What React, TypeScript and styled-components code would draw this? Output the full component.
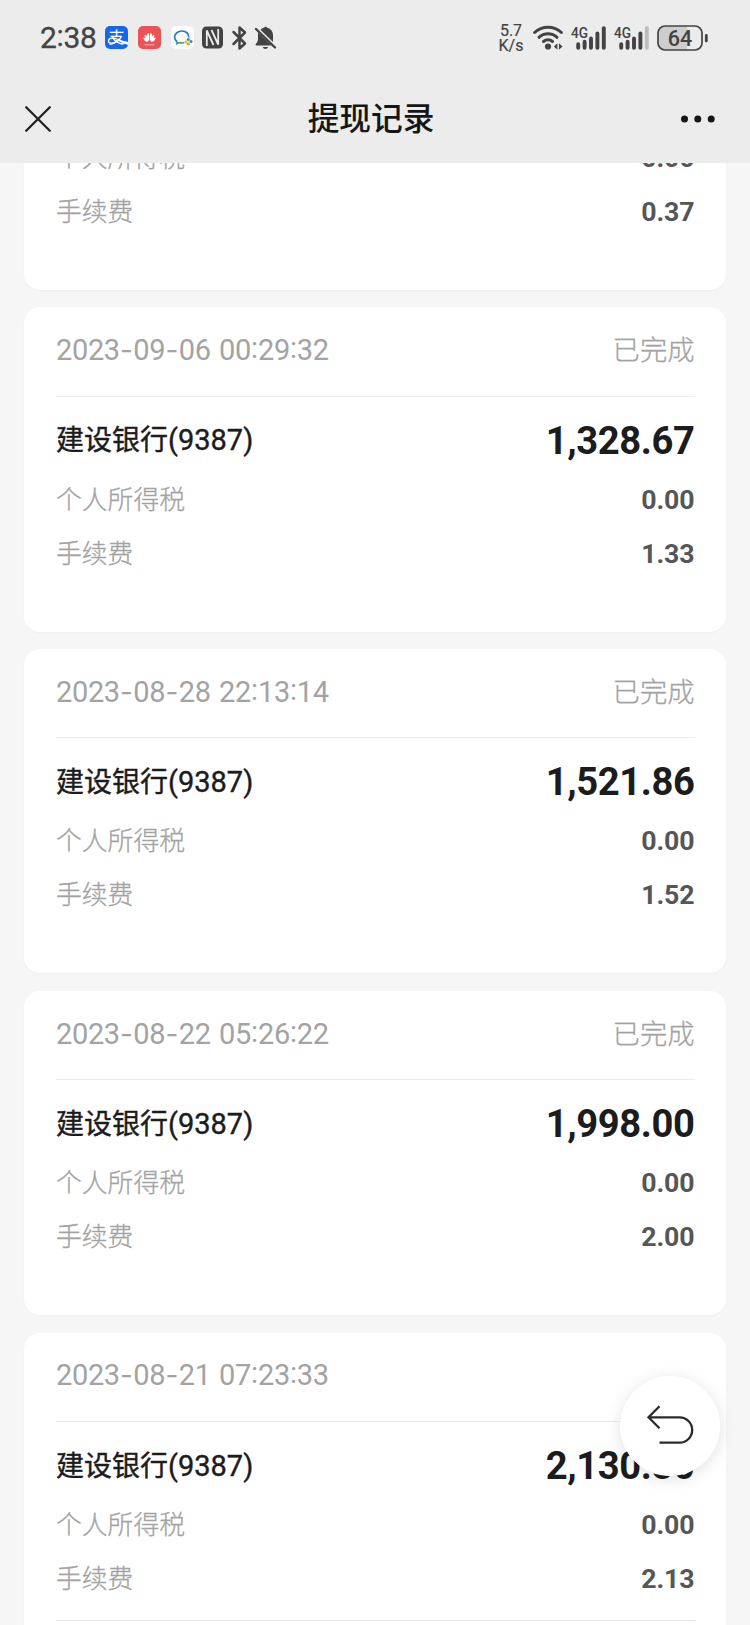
import React from "react";
import styled, { createGlobalStyle } from "styled-components";

const GlobalStyle = createGlobalStyle`
  html, body { margin: 0; padding: 0; background: #f6f6f6; }
  body { font-family: Roboto, "Noto Sans CJK SC", sans-serif; }
  * { box-sizing: border-box; }
`;

const Screen = styled.main`
  width: 750px;
  height: 1625px;
  display: flex;
  flex-direction: column;
  overflow: hidden;
  background: #f6f6f6;
`;

const Top = styled.header`
  flex: none;
  height: 163px;
  background: #ececec;
  position: relative;
  z-index: 1;
`;

const StatusBar = styled.div`
  height: 75px;
  padding: 0 42px 0 40px;
  display: flex;
  justify-content: space-between;
  align-items: center;
  color: #434343;
`;

const StatusGroup = styled.div`
  display: flex;
  align-items: center;
`;

const Clock = styled.span`
  width: 65px;
  font-size: 30px;
  line-height: 36px;
  letter-spacing: -0.3px;
  white-space: nowrap;
  -webkit-text-stroke: 0.3px #434343;
  i { font-style: normal; position: relative; top: -2px; }
`;

const Icon = styled.svg<{ $gap?: number }>`
  display: block;
  flex: none;
  overflow: visible;
  margin-left: ${(p) => p.$gap ?? 0}px;
`;

const Speed = styled.div`
  font-size: 16px;
  line-height: 15px;
  text-align: center;
  width: 26px;
  -webkit-text-stroke: 0.2px #434343;
`;

const NavBar = styled.nav`
  height: 87px;
  padding: 0 34px 0 24px;
  display: grid;
  grid-template-columns: 60px 1fr 50px;
  align-items: center;
`;

const Title = styled.h1`
  margin: 0;
  padding: 2px 8px 0 0;
  font-size: 31.7px;
  line-height: 40px;
  font-weight: 500;
  text-align: center;
  color: #161616;
`;

const List = styled.section`
  flex: 1;
  min-height: 0;
  overflow: hidden;
`;

const Records = styled.div`
  margin-top: -32.4px;
  padding: 0 24px;
  display: flex;
  flex-direction: column;
  gap: 17.3px;
`;

const Card = styled.article<{ $tail?: boolean }>`
  flex: none;
  height: ${(p) => (p.$tail ? 159.1 : 324.6)}px;
  padding: 0 31.5px 0 32px;
  border-radius: 16px;
  background: #fff;
  box-shadow: 0 1px 2px rgba(0, 0, 0, 0.03);
`;

const CardHead = styled.div`
  height: 89.5px;
  padding-bottom: 3px;
  display: flex;
  align-items: center;
  justify-content: space-between;
  border-bottom: 1.5px solid #ebebeb;
  color: #a3a3a3;
`;

const Stamp = styled.time`
  font-size: 29px;
  line-height: 36px;
  word-spacing: 1.6px;
  letter-spacing: -0.35px;
  white-space: nowrap;
`;

const Dash = styled.span`
  display: inline-block;
  width: 13.5px;
  text-align: center;
  font-family: Inter, sans-serif;
  font-size: 28px;
  letter-spacing: 0;
`;

const Colon = styled.span`
  display: inline-block;
  width: 7px;
  text-align: center;
  position: relative;
  top: -2px;
`;

const State = styled.span`
  padding-top: 2px;
  font-size: 27.3px;
  line-height: 36px;
  font-weight: 300;
  -webkit-text-stroke: 0.3px #a3a3a3;
`;

const Body = styled.div<{ $ruled?: boolean; $tail?: boolean }>`
  padding-top: ${(p) => (p.$tail ? 0 : 10)}px;
  height: ${(p) => (p.$ruled ? "198.5px" : "auto")};
  border-bottom: ${(p) => (p.$ruled ? "1.5px solid #e6e6e6" : "none")};
`;

const Row = styled.div<{ $main?: boolean }>`
  height: ${(p) => (p.$main ? 66 : 54)}px;
  padding-top: ${(p) => (p.$main ? 2 : 0)}px;
  display: flex;
  align-items: center;
  justify-content: space-between;
`;

const Bank = styled.span`
  font-size: 28px;
  line-height: 40px;
  font-weight: 400;
  color: #1c1c1c;
  -webkit-text-stroke: 0.4px #1c1c1c;
  b { font-size: 29px; font-weight: 400; }
`;

const Amount = styled.strong`
  font-size: 38.2px;
  line-height: 44px;
  font-weight: 700;
  letter-spacing: -0.4px;
  color: #1c1c1c;
`;

const Label = styled.span`
  font-size: 25.8px;
  line-height: 36px;
  font-weight: 300;
  color: #a3a3a3;
  -webkit-text-stroke: 0.3px #a3a3a3;
`;

const Value = styled.span`
  font-size: 26.7px;
  line-height: 36px;
  font-weight: 700;
  letter-spacing: -0.1px;
  color: #565656;
`;

const BackButton = styled.button`
  position: fixed;
  left: 620px;
  top: 1376px;
  width: 100px;
  height: 100px;
  padding: 0;
  border: 0;
  border-radius: 50%;
  background: #fff;
  box-shadow: 0 3px 16px rgba(0, 0, 0, 0.12);
  z-index: 2;
`;

type Item = { fee: string; date?: string; amount?: string; state?: string; ruled?: boolean };

const items: Item[] = [
  { fee: "0.37" },
  { date: "2023-09-06 00:29:32", amount: "1,328.67", fee: "1.33", state: "已完成" },
  { date: "2023-08-28 22:13:14", amount: "1,521.86", fee: "1.52", state: "已完成" },
  { date: "2023-08-22 05:26:22", amount: "1,998.00", fee: "2.00", state: "已完成" },
  { date: "2023-08-21 07:23:33", amount: "2,130.80", fee: "2.13", ruled: true },
];

function DateStamp({ value }: { value: string }) {
  return (
    <Stamp>
      {value.split(/([-:])/).map((part, i) =>
        part === "-" ? <Dash key={i}>-</Dash> : part === ":" ? <Colon key={i}>:</Colon> : part
      )}
    </Stamp>
  );
}

function Record({ item }: { item: Item }) {
  const tail = !item.date;
  return (
    <Card $tail={tail}>
      {item.date && (
        <CardHead>
          <DateStamp value={item.date} />
          {item.state && <State>{item.state}</State>}
        </CardHead>
      )}
      <Body $ruled={item.ruled} $tail={tail}>
        {item.amount && (
          <Row $main>
            <Bank>建设银行<b>(9387)</b></Bank>
            <Amount>{item.amount}</Amount>
          </Row>
        )}
        <Row><Label>个人所得税</Label><Value>0.00</Value></Row>
        <Row><Label>手续费</Label><Value>{item.fee}</Value></Row>
      </Body>
    </Card>
  );
}

function Signal({ gap, weak }: { gap: number; weak?: boolean }) {
  return (
    <Icon $gap={gap} width="35" height="26" viewBox="0 0 35 26">
      <text x="0" y="12.5" fontFamily="Roboto" fontWeight="500" fontSize="15.5" textLength="17" lengthAdjust="spacingAndGlyphs" fill="#434343">4G</text>
      <g strokeWidth="3.9" strokeLinecap="round" stroke="#434343">
        <path d="M7.2 19.3V22.8M13.6 16.8V22.8M20 13.5V22.8M26.4 8.5V22.8" />
        <path d="M32.8 3.2V22.8" stroke={weak ? "#bdbdbd" : "#434343"} />
      </g>
    </Icon>
  );
}

function StatusLeft() {
  return (
    <StatusGroup>
      <Clock>2<i>:</i>38</Clock>
      <Icon width="23" height="23" viewBox="0 0 23 23">
        <rect width="23" height="23" rx="5" fill="#1668ea" />
        <text x="3.500" y="16.500" fontFamily="Noto Sans CJK SC" fontWeight="400" fontSize="16" fill="#fff">支</text>
        <path d="M13 12.500c3 1.800 6.500 2.800 10 3.400v2.900c-4-.8-8-2.700-11-4.500z" fill="#fff" />
        <path d="M12.500 13.500c-2-1.600-8.500-2.200-9 1.200s6 3.400 9-.9" fill="none" stroke="#fff" strokeWidth="1.300" />
      </Icon>
      <Icon $gap={10} width="23" height="23" viewBox="0 0 23 23">
        <rect width="23" height="23" rx="5" fill="#ec5358" />
        <g fill="#fff">
          <path d="M11 15.300C8.300 12 8.400 7.500 10.500 7c.9 1.500.9 5 .5 8.300zM12 15.300c2.700-3.300 2.600-7.800.5-8.300-.9 1.500-.9 5-.5 8.300zM10.300 15.600C7.500 13.500 6 11 7 8.600c1.700.8 3 3.500 3.300 7zM12.700 15.600C15.500 13.500 17 11 16 8.600c-1.700.8-3 3.500-3.300 7zM9.900 16C7 15.600 5.300 13.800 5.500 11.500c2 .4 3.600 2.200 4.400 4.500zM13.100 16c2.900-.4 4.600-2.200 4.400-4.500-2 .4-3.600 2.200-4.400 4.500z" />
          <path d="M6.500 18.300h10v1h-10z" opacity=".55" />
        </g>
      </Icon>
      <Icon $gap={10} width="23" height="23" viewBox="0 0 23 23">
        <rect width="23" height="23" rx="5" fill="#fcfcfc" />
        <path d="M17.800 11.500C18 7.500 15 5 11 5S3.600 7.600 3.600 11c0 2 .9 3.700 2.500 4.800" fill="none" stroke="#2a7cc0" strokeWidth="1.700" />
        <path d="M6.200 15.500l-.4 2.200 2.700-1.200c1.500.5 3 .6 4.500.3" fill="none" stroke="#3f9c8c" strokeWidth="1.600" />
        <circle cx="17.300" cy="13.500" r="1.500" fill="#3e9b67" />
        <circle cx="20" cy="15.600" r="1.500" fill="#3983ca" />
        <circle cx="15" cy="16" r="1.600" fill="#e6b43e" />
        <circle cx="17.400" cy="18" r="1.600" fill="#e99b3e" />
      </Icon>
      <Icon $gap={7.500} width="21" height="23" viewBox="0 0 21 23">
        <rect y=".5" width="21" height="22" rx="4.500" fill="#434343" />
        <path d="M4.800 20V4.500L11.500 19M16.200 3V18.500L9.500 4" fill="none" stroke="#ececec" strokeWidth="1.800" />
      </Icon>
      <Icon $gap={9} width="15" height="24" viewBox="0 0 15 24">
        <path d="M1.500 6L13 17.500 7.500 22.500V1.500L13 6.500 1.500 18" fill="none" stroke="#434343" strokeWidth="2.500" strokeLinejoin="round" strokeLinecap="round" />
      </Icon>
      <Icon $gap={8} width="21" height="24" viewBox="0 0 21 24">
        <path d="M5.500 3.800C6.600 2.600 7.700 2 9 1.700c.6-1.300 2.600-1.300 3.200 0 4 1 5.800 4 5.800 7.700v6.600zM3 6.500L16.500 19.500H1.300c-.8 0-1-.8-.5-1.400C2.700 16 3 14.500 3 11.500z" fill="#434343" />
        <path d="M7.700 21h5.400c-.8 2.500-4.600 2.500-5.400 0z" fill="#434343" />
        <path d="M1 3L20 21.500" stroke="#434343" strokeWidth="2.400" strokeLinecap="round" />
      </Icon>
    </StatusGroup>
  );
}

function StatusRight() {
  return (
    <StatusGroup>
      <Speed>5.7<br />K/s</Speed>
      <Icon $gap={9} width="30" height="26" viewBox="0 0 30 26">
        <g fill="none" stroke="#434343" strokeWidth="3" strokeLinecap="round">
          <path d="M1.600 7.500C9 .6 21 .6 28.400 7.500M6 12.300C11 7.600 19 7.600 24 12.300M10.500 16.500C13 14.300 17 14.300 19.500 16.500" />
        </g>
        <circle cx="15" cy="21.500" r="3.100" fill="#434343" />
        <path d="M24.400 18.300v6.400l-3.500-3.200zM26 18.300v6.400l3.500-3.200z" fill="#434343" />
      </Icon>
      <Signal gap={8} />
      <Signal gap={8} weak />
      <Icon $gap={8} width="51" height="26" viewBox="0 0 51 26">
        <rect x="1" y="1" width="44" height="24" rx="7" fill="#ececec" />
        <path d="M8 1H30V25H8A7 7 0 0 1 1 18V8A7 7 0 0 1 8 1z" fill="#cecece" />
        <rect x="1" y="1" width="44" height="24" rx="7" fill="none" stroke="#434343" strokeWidth="1.700" />
        <text x="23" y="20.700" textAnchor="middle" fontFamily="Roboto" fontWeight="500" fontSize="21.500" fill="#434343">64</text>
        <path d="M49.300 10.500V16" stroke="#434343" strokeWidth="2.800" strokeLinecap="round" />
      </Icon>
    </StatusGroup>
  );
}

export default function App() {
  return (
    <>
      <GlobalStyle />
      <Screen>
        <Top>
          <StatusBar>
            <StatusLeft />
            <StatusRight />
          </StatusBar>
          <NavBar>
            <Icon width="28" height="28" viewBox="0 0 28 28">
              <path d="M2.200 2.200L25.800 25.800M25.800 2.200L2.200 25.800" stroke="#222" strokeWidth="2.300" strokeLinecap="round" />
            </Icon>
            <Title>提现记录</Title>
            <Icon $gap={14} width="36" height="8" viewBox="0 0 36 8">
              <circle cx="4.500" cy="4" r="3.500" fill="#161616" />
              <circle cx="17.800" cy="4" r="3.500" fill="#161616" />
              <circle cx="31.200" cy="4" r="3.500" fill="#161616" />
            </Icon>
          </NavBar>
        </Top>
        <List>
          <Records>
            {items.map((item) => <Record key={item.fee} item={item} />)}
          </Records>
        </List>
        <BackButton aria-label="返回">
          <Icon width="100" height="100" viewBox="0 0 100 100">
            <path d="M39.500 30.300L28.500 41.300 39.500 52.300M29 41.300H59.500A12.700 12.700 0 0 1 59.500 66.700H39.500" fill="none" stroke="#2b2b2b" strokeWidth="2.300" />
          </Icon>
        </BackButton>
      </Screen>
    </>
  );
}
